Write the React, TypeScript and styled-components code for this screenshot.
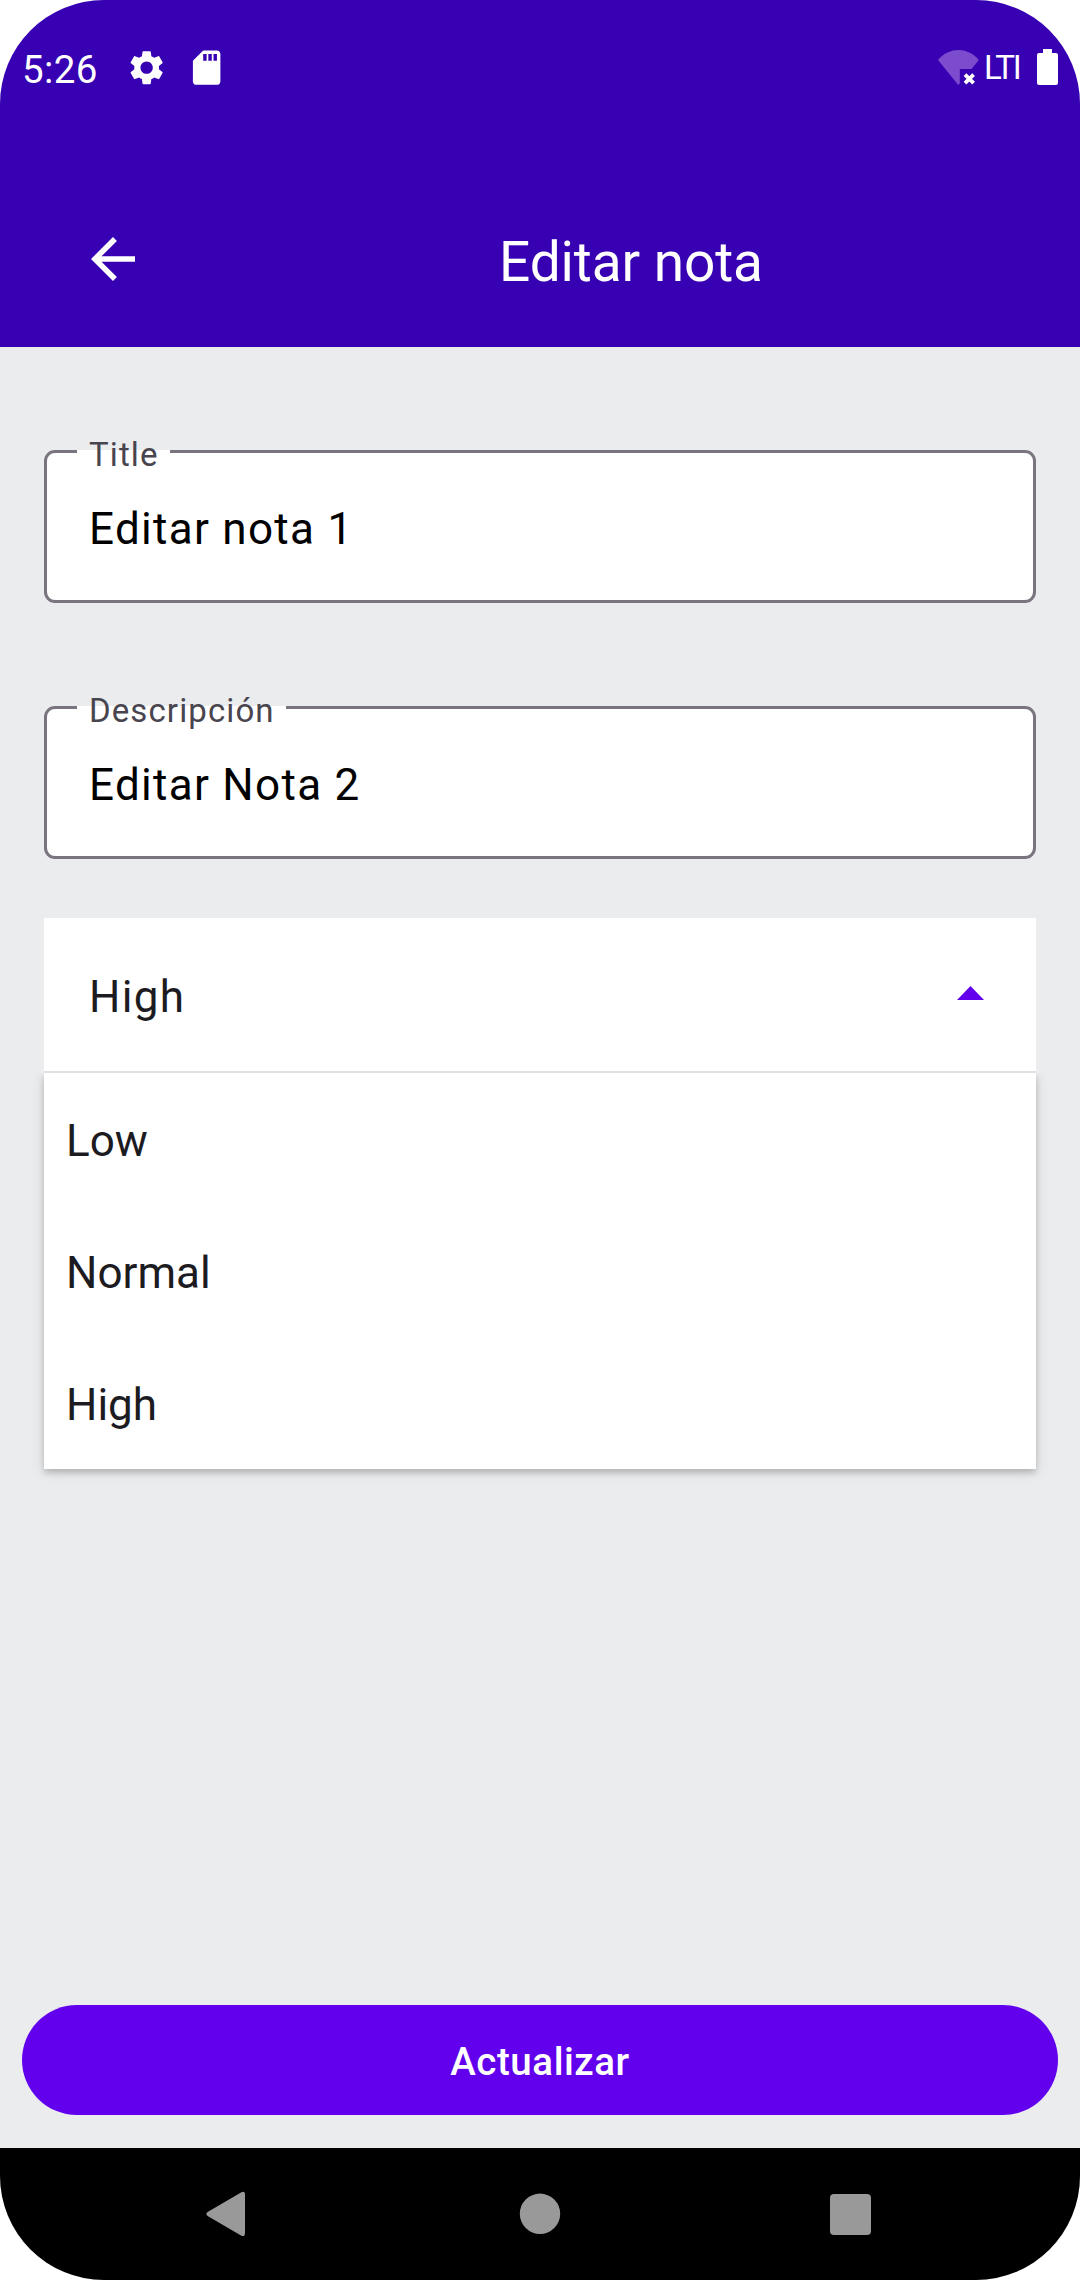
import React from 'react';
import styled, { createGlobalStyle } from 'styled-components';

const GlobalStyle = createGlobalStyle`
  * { box-sizing: border-box; }
  body { margin: 0; background: #ffffff; }
`;

const Screen = styled.div`
  width: 1080px;
  height: 2280px;
  display: flex;
  flex-direction: column;
  overflow: hidden;
  border-radius: 104px;
  background: #ebecee;
  font-family: Roboto, 'Liberation Sans', sans-serif;
`;

const Header = styled.header`
  height: 347px;
  flex: none;
  display: flex;
  flex-direction: column;
  background: #3700b3;
  color: #ffffff;
`;

const StatusBar = styled.div`
  height: 136px;
  display: flex;
  align-items: flex-start;
  justify-content: space-between;
  padding: 46px 22px 0 22px;
`;

const StatusGroup = styled.div`
  display: flex;
  align-items: flex-start;
`;

const Clock = styled.span`
  width: 104px;
  font-size: 38.5px;
  line-height: 48px;
  letter-spacing: 0.35px;
`;

const StatusIcon = styled.svg<{ $gap?: number }>`
  display: block;
  width: 41.25px;
  height: 41.25px;
  margin: 0.7px 0 0 ${(p) => p.$gap ?? 0}px;
  fill: currentColor;
`;

const Network = styled.span`
  width: 38px;
  margin-left: 4px;
  font-size: 33px;
  line-height: 44px;
  letter-spacing: -2.1px;
  white-space: nowrap;
`;

const Battery = styled.svg`
  display: block;
  width: 21px;
  height: 36px;
  margin: 3px 0 0 15px;
  fill: currentColor;
`;

const Wifi = styled.svg`
  display: block;
  width: 42px;
  height: 36px;
  margin-top: 4px;
`;

const AppBar = styled.div`
  flex: 1;
  display: flex;
  align-items: flex-start;
  padding: 90px 80px 0;
`;

const BackIcon = styled.svg`
  width: 66px;
  height: 66px;
  flex: none;
  fill: currentColor;
`;

const Heading = styled.h1`
  margin: 3px 0 0 353px;
  font-size: 55px;
  font-weight: 400;
  line-height: 66px;
  letter-spacing: -0.1px;
  white-space: nowrap;
`;

const Form = styled.main`
  flex: 1;
  display: flex;
  flex-direction: column;
  padding: 103px 44px 0;
`;

const Field = styled.div`
  position: relative;
  height: 153px;
  margin-bottom: 103px;
  padding: 5px 42px 0;
  display: flex;
  align-items: center;
  border: 3px solid #79747e;
  border-radius: 11px;
  background: #ffffff;

  & + & {
    margin-bottom: 59px;
  }
`;

const Label = styled.label`
  position: absolute;
  top: -3px;
  left: 30px;
  height: 10px;
  padding: 0 11px 0 12px;
  background: #ffffff;
  color: #49454f;
  font-size: 33px;
  line-height: 10px;
  letter-spacing: 1.1px;
  white-space: nowrap;
`;

const Value = styled.span<{ $color: string }>`
  color: ${(p) => p.$color};
  font-size: 44px;
  line-height: 66px;
  letter-spacing: 1.3px;
  white-space: nowrap;
`;

const Select = styled.div`
  height: 155px;
  flex: none;
  display: flex;
  align-items: center;
  justify-content: space-between;
  padding: 5px 52px 0 45px;
  border-bottom: 2px solid #e1e0e6;
  background: #ffffff;
`;

const Caret = styled.svg`
  width: 27px;
  height: 14px;
  margin-bottom: 9px;
  fill: #6200ee;
`;

const Menu = styled.ul`
  margin: 0;
  padding: 0;
  list-style: none;
  background: #ffffff;
  box-shadow: 0 4px 6px rgba(0, 0, 0, 0.18), 0 2px 14px rgba(0, 0, 0, 0.1);
  clip-path: inset(0 -20px -30px -20px);
`;

const Option = styled.li`
  height: 132px;
  display: flex;
  align-items: center;
  padding: 4px 22px 0;
  color: #1c1b1f;
  font-size: 44px;
  line-height: 66px;
`;

const Footer = styled.div`
  flex: none;
  padding: 0 22px 33px;
`;

const SubmitButton = styled.button`
  display: block;
  width: 100%;
  height: 110px;
  padding: 2px 0 0;
  border: 0;
  border-radius: 55px;
  background: #6200ee;
  color: #ffffff;
  font-family: inherit;
  font-size: 38.5px;
  font-weight: 500;
  line-height: 55px;
  letter-spacing: 0.55px;
`;

const NavBar = styled.nav`
  height: 132px;
  flex: none;
  display: flex;
  justify-content: center;
  align-items: center;
  gap: 245px;
  background: #000000;
`;

const NavIcon = styled.svg`
  width: 66px;
  height: 66px;
  fill: #999999;
`;

const options = ['Low', 'Normal', 'High'];

export default function App() {
  return (
    <Screen>
      <GlobalStyle />
      <Header>
        <StatusBar>
          <StatusGroup>
            <Clock>5:26</Clock>
            <StatusIcon viewBox="0 0 24 24">
              <path d="M19.14 12.94c.04-.3.06-.61.06-.94 0-.32-.02-.64-.07-.94l2.03-1.58c.18-.14.23-.41.12-.61l-1.92-3.32c-.12-.22-.37-.29-.59-.22l-2.39.96c-.5-.38-1.03-.7-1.62-.94L14.4 2.81c-.04-.24-.24-.41-.48-.41h-3.84c-.24 0-.43.17-.47.41l-.36 2.54c-.59.24-1.13.57-1.62.94l-2.39-.96c-.22-.08-.47 0-.59.22L2.74 8.87c-.12.21-.08.47.12.61l2.03 1.58c-.05.3-.09.63-.09.94s.02.64.07.94l-2.03 1.58c-.18.14-.23.41-.12.61l1.92 3.32c.12.22.37.29.59.22l2.39-.96c.5.38 1.03.7 1.62.94l.36 2.54c.05.24.24.41.48.41h3.84c.24 0 .44-.17.47-.41l.36-2.54c.59-.24 1.13-.56 1.62-.94l2.39.96c.22.08.47 0 .59-.22l1.92-3.32c.12-.22.07-.47-.12-.61l-2.01-1.58zM12 15.6c-1.98 0-3.6-1.62-3.6-3.6s1.62-3.6 3.6-3.6 3.6 1.62 3.6 3.6-1.62 3.6-3.6 3.6z" />
            </StatusIcon>
            <StatusIcon $gap={19.2} viewBox="0 0 24 24">
              <path d="M18 2h-8L4.02 8 4 20c0 1.1.9 2 2 2h12c1.1 0 2-.9 2-2V4c0-1.1-.9-2-2-2zm-6 6h-2V4h2v4zm3 0h-2V4h2v4zm3 0h-2V4h2v4z" />
            </StatusIcon>
          </StatusGroup>
          <StatusGroup>
            <Wifi viewBox="0 0 42 36">
              <path
                d="M0 10 C11.5 -3.2 29.5 -3.2 40.8 10 L33.5 19 H21.8 V33.2 L20.3 35 Z"
                fill="#7b4dce"
              />
              <path
                d="M27 24.6 L35.6 33.2 M35.6 24.6 L27 33.2"
                stroke="#ffffff"
                strokeWidth="3.8"
              />
            </Wifi>
            <Network>LTI</Network>
            <Battery viewBox="0 0 21 36">
              <path d="M6 0 H15 V4 H19 Q21 4 21 6 V34 Q21 36 19 36 H2 Q0 36 0 34 V6 Q0 4 2 4 H6 Z" />
            </Battery>
          </StatusGroup>
        </StatusBar>
        <AppBar>
          <BackIcon viewBox="0 0 24 24">
            <path d="M20 11H7.83l5.59-5.59L12 4l-8 8 8 8 1.41-1.41L7.83 13H20v-2z" />
          </BackIcon>
          <Heading>Editar nota</Heading>
        </AppBar>
      </Header>
      <Form>
        <Field>
          <Label>Title</Label>
          <Value $color="#000000">Editar nota 1</Value>
        </Field>
        <Field>
          <Label>Descripción</Label>
          <Value $color="#000000">Editar Nota 2</Value>
        </Field>
        <Select>
          <Value $color="#1c1b1f">High</Value>
          <Caret viewBox="0 0 27 14">
            <path d="M0 14 L13.5 0 L27 14 Z" />
          </Caret>
        </Select>
        <Menu>
          {options.map((name) => (
            <Option key={name}>{name}</Option>
          ))}
        </Menu>
      </Form>
      <Footer>
        <SubmitButton type="button">Actualizar</SubmitButton>
      </Footer>
      <NavBar>
        <NavIcon viewBox="0 0 66 66">
          <path d="M11.6 31.1 L45 11.4 Q49 9.6 49 13.8 V52 Q49 56.4 45 54.6 L11.6 34.9 Q9 33 11.6 31.1 Z" />
        </NavIcon>
        <NavIcon viewBox="0 0 66 66">
          <circle cx="33" cy="32.8" r="20.2" />
        </NavIcon>
        <NavIcon viewBox="0 0 66 66">
          <rect x="12" y="13" width="41" height="41" rx="4" />
        </NavIcon>
      </NavBar>
    </Screen>
  );
}
